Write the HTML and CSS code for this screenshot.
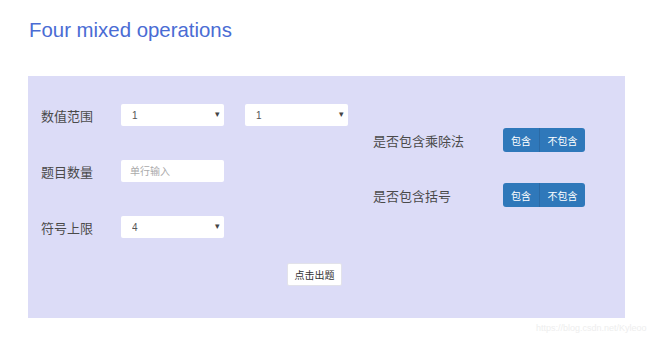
FILE: index.html
```html
<!DOCTYPE html>
<html lang="zh-CN">
<head>
    <meta charset="UTF-8">
    <meta name="viewport" content="width=device-width, initial-scale=1.0">
    <title>Four mixed operations</title>
    <link rel="stylesheet" href="styles.css">
</head>
<body>
    <h1 class="title">Four mixed operations</h1>
    <div class="panel">
        <div class="form-body">
            <div class="left-col">
                <div class="row">
                    <label class="label">数值范围</label>
                    <div class="select-wrap">
                        <select class="select"><option>1</option></select>
                        <span class="arrow">▾</span>
                    </div>
                    <div class="select-wrap second">
                        <select class="select"><option>1</option></select>
                        <span class="arrow">▾</span>
                    </div>
                </div>
                <div class="row">
                    <label class="label" for="count">题目数量</label>
                    <input class="text-input" type="text" id="count" placeholder="单行输入">
                </div>
                <div class="row">
                    <label class="label">符号上限</label>
                    <div class="select-wrap">
                        <select class="select"><option>4</option></select>
                        <span class="arrow">▾</span>
                    </div>
                </div>
            </div>
            <div class="right-col">
                <div class="row">
                    <span class="label wide">是否包含乘除法</span>
                    <div class="btn-group">
                        <button class="btn-blue first">包含</button>
                        <button class="btn-blue">不包含</button>
                    </div>
                </div>
                <div class="row">
                    <span class="label wide">是否包含括号</span>
                    <div class="btn-group">
                        <button class="btn-blue first">包含</button>
                        <button class="btn-blue">不包含</button>
                    </div>
                </div>
            </div>
        </div>
        <button class="submit">点击出题</button>
    </div>
    <div class="watermark">https://blog.csdn.net/Kyleoo</div>
</body>
</html>
```

FILE: styles.css
```css
body {
    font-family: "Liberation Sans", "Noto Sans CJK SC", sans-serif;
    background: #fff;
    margin: 0;
    width: 650px;
    height: 340px;
    overflow: hidden;
}
.title {
    margin: 0;
    padding: 19px 0 0 29px;
    height: 76px;
    box-sizing: border-box;
    font-size: 20.4px;
    font-weight: normal;
    color: #4a6cd4;
}
.panel {
    margin-left: 28px;
    width: 597px;
    height: 242px;
    box-sizing: border-box;
    padding: 28px 13px 0;
    background: #dcdcf7;
}
.form-body {
    display: flex;
}
.left-col {
    display: flex;
    flex-direction: column;
    gap: 34px;
}
.row {
    display: flex;
    align-items: center;
}
.label {
    width: 80px;
    font-size: 13px;
    color: #4a4a4a;
}
.label.wide {
    width: 130px;
}
.select-wrap {
    position: relative;
    width: 103px;
    height: 22px;
}
.select-wrap.second {
    margin-left: 21px;
}
.select {
    appearance: none;
    -webkit-appearance: none;
    width: 100%;
    height: 100%;
    border: none;
    border-radius: 2px;
    background: #fff;
    padding: 0 11px;
    font-family: inherit;
    font-size: 10px;
    color: #555;
}
.arrow {
    position: absolute;
    right: 4px;
    top: 5px;
    font-size: 9px;
    color: #444;
    pointer-events: none;
}
.text-input {
    width: 103px;
    height: 22px;
    box-sizing: border-box;
    border: none;
    border-radius: 2px;
    padding: 0 9px;
    font-family: inherit;
    font-size: 10px;
}
.text-input::placeholder {
    color: #aaa;
}
.right-col {
    margin-left: 25px;
    margin-top: 24px;
    display: flex;
    flex-direction: column;
    gap: 31px;
}
.right-col .row {
    height: 24px;
}
.btn-group {
    display: flex;
    border-radius: 3px;
    overflow: hidden;
}
.btn-blue {
    height: 24px;
    width: 46px;
    padding: 0;
    border: none;
    background: #2f78ba;
    color: #fff;
    font-family: inherit;
    font-size: 10px;
    border-left: 1px solid #2b6aa5;
}
.btn-blue.first {
    width: 36px;
    border-left: none;
}
.submit {
    display: block;
    margin: 25px 0 0 246px;
    width: 55px;
    height: 23px;
    padding: 0;
    border: 1px solid #e2e2ea;
    border-radius: 2px;
    background: #fff;
    color: #333;
    font-family: inherit;
    font-size: 10px;
}
.watermark {
    margin: 5px 0 0 536px;
    font-size: 9px;
    color: #eeeeee;
}
```
